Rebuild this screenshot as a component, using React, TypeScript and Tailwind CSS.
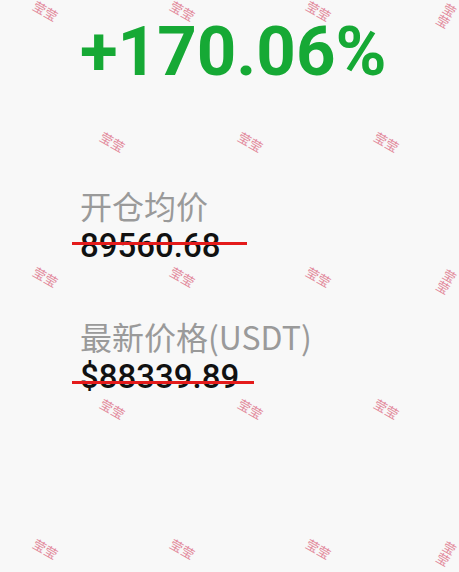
import React from 'react';

const marks: [number, number][] = [
  [45, 12], [182, 12], [318, 12], [452, 12],
  [112, 143], [250, 143], [386, 143],
  [45, 278], [182, 278], [318, 278], [452, 278],
  [112, 410], [250, 410], [386, 410],
  [45, 550], [182, 550], [318, 550], [452, 550],
];

const PriceRow = ({
  label,
  value,
  lineWidth,
  lineTop,
}: {
  label: string;
  value: string;
  lineWidth: number;
  lineTop: number;
}) => (
  <div className="flex flex-col">
    <div
      className="text-[32px] leading-[40px] text-[#9a9a9a]"
      style={{ fontFamily: '"Noto Sans CJK SC", Roboto, sans-serif' }}
    >
      {label}
    </div>
    <div className="relative mt-[3px] text-[33px] leading-[36px] font-medium text-[#111]">
      {value}
      {/* hand-drawn strike line, starts a bit left of the text */}
      <span
        className="absolute left-[-8px] h-[3px] bg-[#e41b1b]"
        style={{ width: lineWidth, top: lineTop }}
      />
    </div>
  </div>
);

export default function App() {
  return (
    <div
      className="relative w-[459px] h-[572px] overflow-hidden bg-[#f8f8f8]"
      style={{ fontFamily: 'Roboto, "Noto Sans CJK SC", sans-serif' }}
    >
      <div className="flex flex-col pl-[80px] pt-[17px]">
        <div className="text-[69px] leading-[70px] font-bold text-[#16a935]">+170.06%</div>

        <div className="mt-[98px] flex flex-col gap-[52px]">
          <PriceRow label="开仓均价" value="89560.68" lineWidth={175} lineTop={14} />
          <PriceRow label="最新价格(USDT)" value="$88339.89" lineWidth={182} lineTop={22} />
        </div>
      </div>

      {/* watermark overlay */}
      {marks.map(([x, y], i) => (
        <span
          key={i}
          className="absolute text-[13px] leading-none text-[#e2889a] rotate-[30deg] pointer-events-none"
          style={{ left: x - 13, top: y - 7 }}
        >
          莹莹
        </span>
      ))}
    </div>
  );
}
